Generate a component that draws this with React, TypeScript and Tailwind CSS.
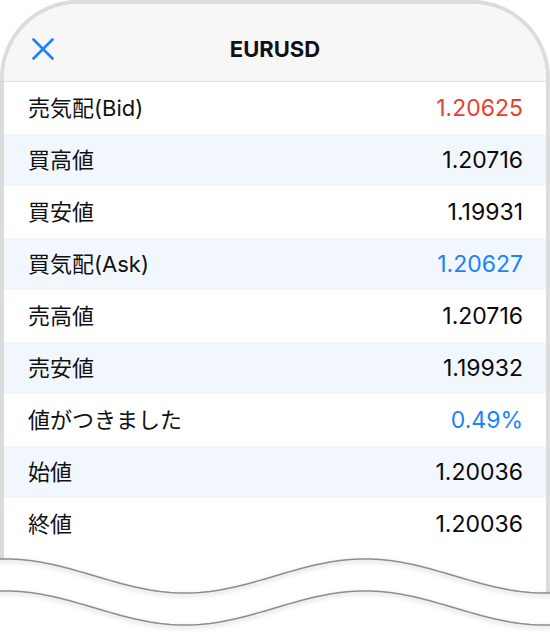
type Row = { label: string; value: string; tone?: 'red' | 'blue' };

const ROWS: Row[] = [
  { label: '売気配(Bid)', value: '1.20625', tone: 'red' },
  { label: '買高値', value: '1.20716' },
  { label: '買安値', value: '1.19931' },
  { label: '買気配(Ask)', value: '1.20627', tone: 'blue' },
  { label: '売高値', value: '1.20716' },
  { label: '売安値', value: '1.19932' },
  { label: '値がつきました', value: '0.49%', tone: 'blue' },
  { label: '始値', value: '1.20036' },
  { label: '終値', value: '1.20036' },
];

const TONE: Record<string, string> = {
  red: 'text-[#e8402f]',
  blue: 'text-[#1a83fb]',
};

function wave(offset: number) {
  const pts: string[] = [];
  for (let x = -10; x <= 560; x += 5) {
    const y = 576 + offset - 17 * Math.cos((2 * Math.PI * (x - 5)) / 360);
    pts.push(`${x},${y.toFixed(2)}`);
  }
  return pts;
}

function TornEdge() {
  const top = wave(0);
  const bottom = wave(32);
  const fill = `M${top.join(' L')} L560,640 L-10,640 Z`;
  return (
    <svg className="absolute left-0 top-0 pointer-events-none" width="550" height="635" viewBox="0 0 550 635">
      <defs>
        <filter id="soft" x="-5%" y="-50%" width="110%" height="200%">
          <feGaussianBlur stdDeviation="2" />
        </filter>
      </defs>
      <path d={fill} fill="#ffffff" />
      <path d={`M${top.join(' L')}`} fill="none" stroke="#000" strokeOpacity="0.12" strokeWidth="3" transform="translate(0 2)" filter="url(#soft)" />
      <path d={`M${top.join(' L')}`} fill="none" stroke="#8d8d8d" strokeWidth="1.5" />
      <path d={`M${bottom.join(' L')}`} fill="none" stroke="#000" strokeOpacity="0.12" strokeWidth="3" transform="translate(0 2)" filter="url(#soft)" />
      <path d={`M${bottom.join(' L')}`} fill="none" stroke="#8d8d8d" strokeWidth="1.5" />
    </svg>
  );
}

function CloseIcon() {
  return (
    <svg width="22" height="22" viewBox="0 0 22 22" className="text-[#1a83fb]">
      <path d="M1.5 1.5 L20.5 20.5 M20.5 1.5 L1.5 20.5" stroke="currentColor" strokeWidth="2.6" strokeLinecap="round" fill="none" />
    </svg>
  );
}

export default function App() {
  return (
    <div className="relative w-[550px] h-[635px] bg-white overflow-hidden font-['Inter','Noto_Sans_CJK_JP',sans-serif]">
      <div className="w-[550px] h-[620px] border-4 border-b-0 border-[#dcdcdc] rounded-t-[78px] overflow-hidden bg-white">
        <div className="relative h-[78px] pt-[13px] bg-[#f7f7f7] border-b border-[#e2e2e2] flex items-center justify-center">
          <button className="absolute left-[28px] top-[34px]">
            <CloseIcon />
          </button>
          <span className="text-[22px] font-bold text-[#111]">EURUSD</span>
        </div>
        {ROWS.map((r, i) => (
          <div
            key={r.label}
            className={`h-[52px] flex items-center justify-between pl-6 pr-[23px] ${i % 2 === 1 ? 'bg-[#f2f7fd]' : 'bg-white'}`}
          >
            <span className="text-[22px] text-[#111]">{r.label}</span>
            <span className={`text-[23px] ${r.tone ? TONE[r.tone] : 'text-[#0a0a0a]'}`}>{r.value}</span>
          </div>
        ))}
      </div>
      <TornEdge />
    </div>
  );
}
